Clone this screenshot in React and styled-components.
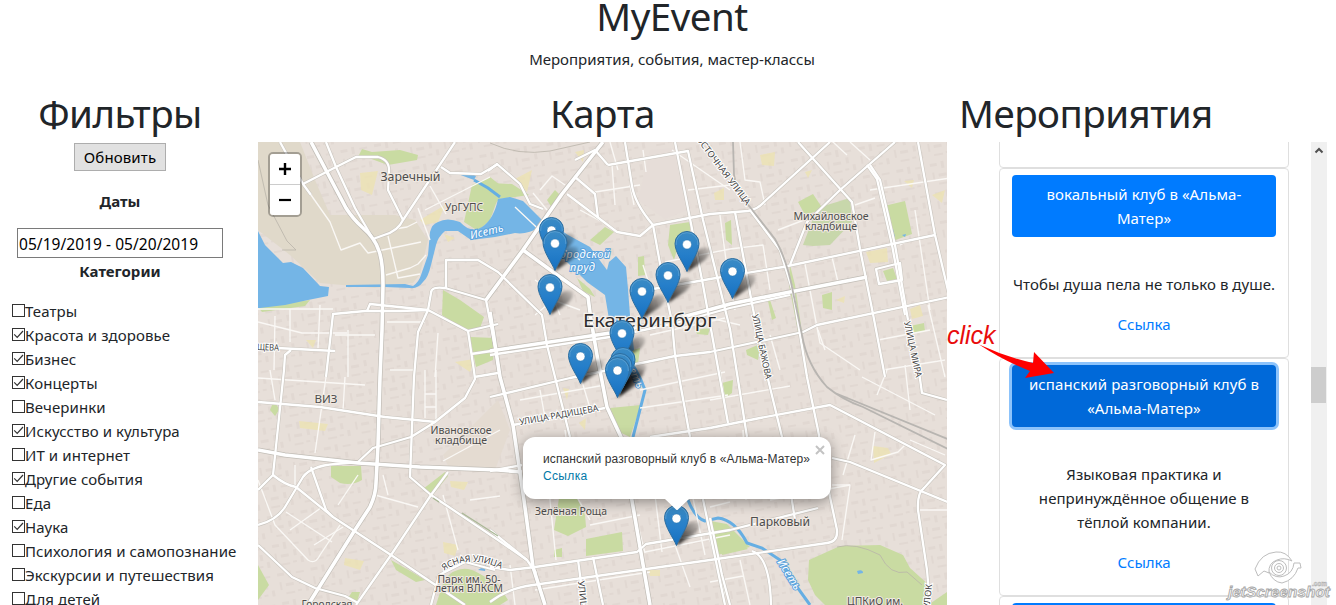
import React from 'react';
import styled, { createGlobalStyle } from 'styled-components';

const GlobalStyle = createGlobalStyle`
  * { box-sizing: border-box; }
  html, body { margin: 0; height: 605px; overflow: hidden; background: #fff; }
  body {
    font-family: "Noto Sans", "Open Sans", sans-serif;
    font-size: 16px;
    line-height: 24px;
    color: #212529;
  }
`;

const Page = styled.div`
  position: relative;
  width: 1336px;
  height: 605px;
  overflow: hidden;
`;
const Header = styled.header`
  height: 89px;
  padding-left: 8px;
  text-align: center;
`;
const Title = styled.h1`
  margin: 0;
  font-size: 38.5px;
  font-weight: 400;
  line-height: ${p => p.$lh || 48}px;
  letter-spacing: -0.5px;
  white-space: nowrap;
`;
const Subtitle = styled.p`
  margin: 15px 0 0;
  font-size: 15px;
`;
const Columns = styled.main`
  display: flex;
  height: 516px;
`;
const Filters = styled.section`
  width: 240px;
  margin-right: 18px;
  display: flex;
  flex-direction: column;
  align-items: center;
  & > * { flex-shrink: 0; }
`;
const RefreshButton = styled.button`
  width: 92px;
  height: 28px;
  margin-top: 6px;
  padding: 0;
  border: 1px solid #adadad;
  background: #e1e1e1;
  color: #000;
  font: 15px/26px "Noto Sans", sans-serif;
  letter-spacing: 0.12px;
`;
const Caption = styled.strong`
  margin-top: ${p => p.$mt}px;
  font-size: 15px;
  height: 24px;
`;
const DateInput = styled.input`
  width: 206px;
  height: 30px;
  margin-top: 15px;
  padding: 1px 1px 0;
  border: 1px solid #7a7a7a;
  font: 15.5px "Noto Sans", sans-serif;
  letter-spacing: 0.05px;
  color: #000;
`;
const CategoryList = styled.div`
  width: 240px;
  margin-top: 16px;
  padding-left: 12px;
`;
const Category = styled.label`
  display: flex;
  align-items: center;
  height: 24px;
  font-size: 15px;
  white-space: nowrap;
  letter-spacing: 0.09px;
`;
const Box = styled.span`
  width: 13px;
  height: 13px;
  margin-top: -1px;
  border: 1px solid #333;
  background: #fff;
  display: flex;
  svg { display: block; }
`;
const MapColumn = styled.section`
  width: 689px;
  text-align: center;
`;
const MapFrame = styled.div`
  position: relative;
  width: 689px;
  height: 463px;
  margin-top: 5px;
  overflow: hidden;
  text-align: left;
`;
const ZoomControl = styled.div`
  position: absolute;
  left: 10px;
  top: 10px;
  border: 2px solid rgba(0, 0, 0, 0.27);
  border-radius: 5px;
  background-clip: padding-box;
`;
const ZoomButton = styled.div`
  width: 30px;
  height: ${p => (p.$first ? 31 : 30)}px;
  background: #fff;
  border-bottom: ${p => (p.$first ? '1px solid #ccc' : '0')};
  border-radius: ${p => (p.$first ? '3px 3px 0 0' : '0 0 3px 3px')};
  display: flex;
  align-items: center;
  justify-content: center;
`;
const Popup = styled.div`
  position: absolute;
  left: 265px;
  top: 295px;
  width: 308px;
  height: 62px;
  padding: 14px 19px 0 20px;
  border-radius: 12px;
  background: #fff;
  box-shadow: 0 3px 14px rgba(0, 0, 0, 0.4);
  font: 12px/17px "Liberation Sans", Arial, sans-serif;
  color: #333;
  white-space: nowrap;
  letter-spacing: 0.12px;
`;
const PopupLink = styled.a`
  display: block;
  color: #0078a8;
  letter-spacing: 0.35px;
`;
const PopupTip = styled.svg`
  position: absolute;
  left: 134px;
  top: 62px;
`;
const CloseIcon = styled.svg`
  position: absolute;
  right: 6px;
  top: 8px;
`;
const EventsColumn = styled.section`
  width: 380px;
  display: flex;
  flex-direction: column;
`;
const EventsTitle = styled.div`
  width: 252px;
  margin-left: 12px;
`;
const EventsPane = styled.div`
  height: 463px;
  margin-top: 5px;
  display: flex;
  overflow: hidden;
`;
const EventList = styled.div`
  width: 290px;
  margin-left: 52px;
`;
const Card = styled.article`
  border: 1px solid #dfdfdf;
  border-radius: 4px;
  height: ${p => p.$height}px;
  margin-top: ${p => p.$mt || 0}px;
  padding: 6px 12px 0;
  text-align: center;
  font-size: 15px;
`;
const EventButton = styled.div`
  width: 264px;
  height: 62px;
  padding: 7px 8px;
  margin-bottom: 35px;
  border-radius: 4px;
  color: #fff;
  background: ${p => (p.$active ? '#0069d9' : '#007bff')};
  box-shadow: ${p => (p.$active ? '0 0 0 3px #8cc3fb' : 'none')};
  letter-spacing: 0.1px;
`;
const Description = styled.p`
  margin: 0 -6px 16px;
  letter-spacing: 0.06px;
`;
const CardLink = styled.a`
  color: #007bff;
`;
const Scrollbar = styled.div`
  width: 16px;
  margin-left: 22px;
  background: #f0f0f0;
  display: flex;
  flex-direction: column;
  svg { display: block; }
`;
const Thumb = styled.div`
  width: 15px;
  height: 36px;
  margin-top: 208px;
  background: #cdcdcd;
`;
const ClickNote = styled.div`
  position: absolute;
  left: 947px;
  top: 321px;
  font: italic 25px/28px "Liberation Sans", Arial, sans-serif;
  color: #e80c0c;
`;
const Arrow = styled.svg`
  position: absolute;
  left: 976px;
  top: 340px;
`;
const Watermark = styled.svg`
  position: absolute;
  left: 1222px;
  top: 546px;
`;

const categories = [
  ['Театры', false], ['Красота и здоровье', true], ['Бизнес', true], ['Концерты', true],
  ['Вечеринки', false], ['Искусство и культура', true], ['ИТ и интернет', false],
  ['Другие события', true], ['Еда', false], ['Наука', true],
  ['Психология и самопознание', false], ['Экскурсии и путешествия', false], ['Для детей', false],
];

const highways = [
  'M311 142L328 174L346 208Q353 219 362 227Q375 238 379 251Q383 262 383 285L382 330L380 377L378 445L376 483Q376 494 370 507L353 533L308 605',
  'M603 142L562 194L523 250L486 300',
  'M258 450L285 455L358 463L420 467L498 470L522 472',
  'M490 312L500 377L513 425L524 500L533 567L545 605',
  'M523 250L560 277L588 297L591 320L597 355L607 407L621 437L650 605',
  'M490 351L610 333L672 320L730 304L790 292L867 277',
];
const roads = [
  'M490 355L610 337L672 324L730 308L790 295',
  'M326 142L336 167L355 208L373 239', 'M280 142L303 184L311 195',
  'M303 184L336 167L356 157H378Q390 160 389 172L388 190L403 220',
  'M455 142L403 220Q398 231 384 235L373 239', 'M441 167L450 173L481 174L498 164',
  'M326 377L333 314L365 311H400L428 310L468 331L498 324', 'M367 311L370 304L428 310',
  'M498 284L486 300L445 288Q431 286 431 293L428 310L418 332L414 377L410 477L431 495L498 540L527 560L536 573',
  'M446 288V260H478L498 272L542 315L547 345L555 377L570 437', 'M468 331L474 371L475 379L465 398L435 422L411 437L373 448L358 462L335 464Q311 466 303 477L285 507Q277 520 258 525',
  'M486 300L496 352L500 377', 'M471 354L498 350', 'M474 377L498 373', 'M258 347L335 351', 'M291 350L285 355L284 370L273 475L258 490',
  'M258 402L320 407L385 417L436 422', 'M273 475Q285 485 296 487L333 517L391 555L431 582L465 605',
  'M311 467L326 510L333 517', 'M258 545L292 577L315 588L345 596L358 603', 'M448 472L431 495L391 555L356 605',
  'M488 171L497 164L520 184L530 204L543 209', 'M575 177L595 194L598 218', 'M567 194L617 232L640 236L653 225L710 214L748 211Q758 209 764 202L830 142',
  'M625 142L632 186Q635 204 653 225L663 280L672 322L675 355L690 437L714 552L725 605',
  'M608 165L688 151L703 220L730 329L747 437', 'M675 142L703 285L728 423', 'M575 160L595 150L608 165',
  'M653 289L710 279L783 267L935 235', 'M798 142L852 202L860 249L873 314L885 377',
  'M895 142L840 190L807 222L790 265', 'M867 165L877 179L892 245L905 315', 'M870 165L880 180L895 245L908 320',
  'M918 142L935 235L950 299', 'M735 212L753 309L767 375L782 437L795 520', 'M490 397L570 378L675 356L710 352L803 332L817 325L950 297',
  'M750 210L780 250L793 292L807 377L818 430L830 497L837 530Q838 542 827 543L710 560L533 585Q508 588 490 602',
  'M513 425L605 408', 'M490 471L522 465', 'M490 530L527 560', 'M490 567L510 570L535 567L637 552L646 544L730 530L818 508',
  'M710 428L760 418L830 405L945 465L924 488Q917 493 918 510L927 570L930 605', 'M650 437L710 428', 'M832 458L850 462L950 503',
  'M593 557L603 605', 'M578 560L584 605', 'M710 518L722 575L730 605', 'M752 551Q770 557 771 605', 'M876 269L900 263L902 280L879 284Z', 'M918 365L922 393L947 400', 'M431 605L439 575L465 562L495 570',
];
const streets = [
  'M311 195L330 222L341 250L360 243L368 253L421 242', 'M395 229L407 227L417 222', 'M388 236L398 278L420 274', 'M386 275L410 268L418 264L426 255', 'M418 208L430 240', 'M425 210L490 177',
  'M430 186L446 214', 'M258 309H333', 'M258 322L302 333H347', 'M275 316L274 370', 'M290 309V342', 'M320 305L318 348', 'M335 335H375', 'M387 322H425', 'M348 330V377', 'M438 333L435 377', 'M390 370H414',
  'M258 378L365 385', 'M345 377L343 410', 'M270 370L275 400', 'M326 377L315 453', 'M425 370V418', 'M436 370V422', 'M425 394H436M425 407H436', 'M375 495L418 507', 'M383 475L388 495', 'M443 461L500 430', 'M470 500L500 496', 'M443 495L458 550',
  'M258 480L275 525L308 560Q315 565 320 555L340 525', 'M290 530L325 505', 'M286 512L332 542', 'M314 545L343 527', 'M358 475L338 505', 'M295 465V485', 'M515 207L550 240L580 260', 'M535 280L550 290L560 315', 'M535 315L553 300L580 310', 'M610 142L618 170', 'M643 150L646 172', 'M595 192L640 185', 'M612 165L615 205', 'M630 185L634 205',
  'M540 190L552 176L565 185', 'M533 193L547 210', 'M580 210L608 225', 'M672 150L730 190', 'M688 190L730 185', 'M720 215L726 260L735 310', 'M665 262L730 249L763 245L770 290', 'M643 265L650 287M650 335L725 318', 'M640 390L725 372M640 408L728 395', 'M662 437L672 490M680 437L705 555', 'M600 370L606 406', 'M580 375L590 408', 'M540 390L545 418M520 400L605 385',
  'M570 485L590 520M565 430L573 490', 'M547 470L556 560', 'M630 495L645 553M655 495L662 552', 'M645 552L730 535', 'M675 545L690 587M710 540L725 595', 'M590 525L640 515', 'M510 565L515 605M535 590L650 572',
  'M740 142L745 180L760 182L765 205', 'M778 230L804 220', 'M805 264L820 343L860 370', 'M832 257L838 282M770 335L780 370', 'M818 330L825 350M870 190L950 178', 'M855 205L875 198M900 245L910 240', 'M915 210L930 310M928 305L945 377', 'M878 340L930 330', 'M883 370L945 360M905 365L910 410', 'M710 318L740 325M710 400L790 386M720 370L728 420', 'M862 377L935 415M887 370L877 395', 'M855 435L843 475M875 432L871 460L898 452L905 445', 'M710 507L730 502M832 485H850L842 540', 'M743 430L746 500M770 500L850 485', 'M740 560L750 605M710 582L743 576', 'M910 440L945 455M920 510H947M847 155L820 130M850 142L870 160',
];
const parks = [
  'M358 157L362 149L372 152L400 150L418 155L417 160L388 165L366 157Z', 'M472 185L490 177L500 185L520 190L498 198L490 220L478 231L464 222Z',
  'M258 307L310 300L305 306L262 312Z', 'M443 290L460 300L484 317L480 328L465 330L442 315Z', 'M470 337L495 338L493 360L476 367Z',
  'M331 466H361L362 480Q352 486 340 483L331 477Z', 'M272 405Q277 402 279 410L275 416L270 410Z', 'M258 565L269 585L258 600Z', 'M423 489L445 472L448 476L432 496Z',
  'M391 560L412 572L425 580L416 582L396 570Z', 'M352 592H360L357 602L348 598Z', 'M436 605L444 580Q460 561 480 574L498 584L508 600L500 605Z',
  'M490 183L512 184L529 195L500 199L490 207Z', 'M547 200L555 190L561 196L552 208Z', 'M590 240L605 227L614 232L600 245Z', 'M577 278L590 289L595 297L583 291Z',
  'M670 225L690 222L690 235L680 240L674 260L668 245Z', 'M638 257L644 256L645 275L638 276Z', 'M610 408L641 405L630 437L615 430Z', 'M559 498H577L585 515L586 527L568 536L554 530Z',
  'M586 539L622 532L623 551L586 556Z', 'M554 550L562 548L562 557L554 557Z', 'M798 202L813 194L823 209L805 215Z', 'M884 206L905 201L912 234L890 242Z',
  'M710 521L727 524L750 547L717 555Z', 'M718 525L748 549L722 555Z', 'M809 560L840 546L880 545L903 555L910 568L930 586L925 605H825L815 595L808 580Z', 'M928 605L950 590V605Z', 'M790 265L795 285L802 332L798 332L789 285Z', 'M770 300L776 318L772 320L768 301Z', 'M822 295L832 292L832 310L823 308Z', 'M746 350L760 344L758 360L747 355Z', 'M725 223L731 220L732 245L726 240Z', 'M633 350L640 348L638 364L632 362Z', 'M910 326L924 323L925 331L912 333Z', 'M883 271L893 268L897 279L887 281Z', 'M490 341L494 340L492 350H490Z', 'M695 330L710 328L708 335L697 334Z', 'M722 383L733 380L732 393L725 398Z',
];
const yellow = ['M360 173L378 171L372 195L361 190Z', 'M299 421L328 424L325 431L300 428Z', 'M420 220L445 205L438 222L425 225Z', 'M444 234L455 238L448 242Z', 'M513 180L532 170L527 192Z', 'M450 481L468 482L464 490L451 487Z', 'M345 558L364 561L360 570L344 565Z', 'M443 542L458 545L455 556L444 553Z', 'M575 152L584 150L583 162Z', 'M760 155L775 152L774 166L762 165Z', 'M866 252L887 248L888 262L870 263Z', 'M873 446L888 448L891 454L874 463Z', 'M910 309L920 305L923 316L912 319Z', 'M306 340L316 340L313 348Z', 'M455 362L474 359L470 372Z', 'M714 193L724 188L724 200L715 200Z', 'M904 181L914 180L912 188Z', 'M932 195L945 190L942 203Z', 'M563 388L569 389L567 400Z', 'M836 300L845 296L844 303Z', 'M805 172L812 170L808 178Z', 'M579 423L586 418L585 430Z', 'M648 570H660V576H650Z'];

const labels = [
  ['Заречный', 410.5, 181, 12.5, 60], ['УрГУПС', 464, 211, 10, 38], ['ВИЗ', 326, 403, 11.5, 23],
  ['Ивановское', 461, 434, 10.5, 61], ['кладбище', 461, 444, 10.5, 52], ['Михайловское', 831, 220, 10.5, 75], ['кладбище', 831, 230, 10.5, 52],
  ['Зелёная Роща', 571, 515, 10.5, 72], ['Парковый', 780, 526, 12.5, 60], ['Парк им. 50-', 469, 583, 10.5, 63], ['летия ВЛКСМ', 469, 592, 10.5, 68],
  ['ЦПКиО им.', 875, 605, 10.5, 56], ['Городская', 327, 608, 10.5, 51],
];
const streetLabels = [
  ['УЛИЦА РАДИЩЕВА', 520, 425, -10, 80], ['УЛИЦА БАЖОВА', 752, 315, 78, 66], ['УЛИЦА МИРА', 904, 322, 78, 57],
  ['ВОСТОЧНАЯ УЛИЦА', 692, 134, 53, 90], ['ЩЕВА', 257, 350, 2, 22], ['УЛИЦА', 578, 581, 84, 34], ['ПЕРЕУЛОК', 927, 632, -84, 48],
];
const markers = [[551.5, 217], [687, 231], [555, 230], [732.5, 258], [668, 262], [550, 274], [642, 278], [622, 320], [580.5, 343], [623, 347], [620, 353], [617.5, 357], [676.5, 505]];

function MapDrawing() {
  return (
    <svg width="689" height="463" viewBox="258 142 689 463" fontFamily="Noto Sans, sans-serif">
      <defs>
        <pattern id="blocks" width="34" height="29" patternUnits="userSpaceOnUse" patternTransform="rotate(-10)">
          <path d="M3 4h7v3H3zM14 3h3v7h-3zM22 5h8v2h-8zM4 13h2v8H4zM10 15h8v3h-8zM23 12h3v6h-3zM29 20h3v6h-3zM9 24h9v2H9zM21 23h4v2h-4z" fill="#dcd2cb" opacity=".5" />
        </pattern>
        <linearGradient id="pin" x1="0" y1="0" x2="0" y2="1">
          <stop offset="0" stopColor="#3b8bc4" /><stop offset=".55" stopColor="#267fca" /><stop offset="1" stopColor="#1670c0" />
        </linearGradient>
        <filter id="soft" x="-30%" y="-30%" width="160%" height="160%"><feGaussianBlur stdDeviation="1.4" /></filter>
        <linearGradient id="shade" x1="0" y1="1" x2="1" y2="0">
          <stop offset="0" stopColor="#000" stopOpacity=".9" /><stop offset=".5" stopColor="#000" stopOpacity=".5" /><stop offset="1" stopColor="#000" stopOpacity=".1" />
        </linearGradient>
        <path id="yasnaya" d="M444 571Q468 554 499 568" />
        <symbol id="marker-shadow" overflow="visible">
          <path d="M0 41L4 26Q12 14 22 17Q26 21 18 29Z" fill="url(#shade)" filter="url(#soft)" />
        </symbol>
        <symbol id="marker" overflow="visible">
          <path d="M0 40.5C-3 33 -12 21.5 -12 12.5A12 12 0 0 1 12 12.5C12 21.5 3 33 0 40.5Z" fill="url(#pin)" stroke="#2c6d9f" strokeWidth="1" />
          <path d="M-10.8 14A10.9 10.9 0 1 1 10.8 14" fill="none" stroke="#69a9d8" strokeWidth=".8" opacity=".75" />
          <circle cx="0" cy="13.5" r="4.5" fill="#fff" stroke="#2c74aa" strokeWidth=".5" />
        </symbol>
      </defs>
      <rect x="258" y="142" width="689" height="463" fill="#e7dfd9" />
      <rect x="258" y="142" width="689" height="463" fill="url(#blocks)" />
      <path d="M258 142H300L315 180L330 215H395L415 220L428 240L420 274L413 283L375 288L320 283L290 255L258 230Z" fill="#e0d9ca" />
      <path d="M650 150L675 148L692 208L665 219L638 200Z" fill="#e6ddd8" />
      <path d="M443 455L498 400L510 430L495 470H450Z" fill="#e4dbd1" />
      <g fill="#c9dba2">{parks.map((d, i) => <path key={i} d={d} />)}</g>
      <path d="M803 245L817 208L850 198L852 222L830 245L813 246Z" fill="#c8d7ab" />
      <g fill="#ede3b3" opacity=".8">{yellow.map((d, i) => <path key={i} d={d} />)}</g>
      <g fill="#74b5e6">
        <path d="M258 231L265 245L283 263L291 262L303 268L320 286L329 287L328 296L308 300L285 305L260 308H258Z" />
        <path d="M346 285L405 284L413 286Q419 282 421 275L428 255L430 232Q432 224 438 222Q447 217 460 222Q471 234 482 227Q494 219 498 199L510 197L523 201L542 220L540 227Q527 235 515 233L495 237L471 240L458 231H445Q438 237 436 245L431 265Q428 278 423 282Q418 289 410 288L385 287H346Z" />
        <path d="M458 174L470 173L476 176L474 180Z" />
        <path d="M543 218L568 235L590 247L601 262L607 270L609 262L616 256L626 267L628 289L630 315L634 350L622 358L610 325L605 295L587 282L565 260L545 235Z" />
        <path d="M889 225L893 229L895 237L891 237ZM902 235L906 234L905 237ZM478 570L486 565L485 571ZM857 571Q863 569 863 573L858 574Z" />
      </g>
      <path d="M474 180L488 188L500 197M622 350Q638 370 645 390L633 437M688 500Q695 518 705 521L718 518Q735 520 747 543L762 548L780 560L797 587L810 605" fill="none" stroke="#65aee3" strokeWidth="3" />
      <g fill="none" strokeLinejoin="round">
        <g stroke="#faf8f5" strokeWidth="1.35">{streets.map((d, i) => <path key={i} d={d} />)}</g>
        <g stroke="#c9c5be" strokeWidth="3.4">{roads.map((d, i) => <path key={i} d={d} />)}</g>
        <g stroke="#c1bdb6" strokeWidth="5">{highways.map((d, i) => <path key={i} d={d} />)}</g>
        <g stroke="#fff" strokeWidth="2.3">{roads.map((d, i) => <path key={i} d={d} />)}</g>
        <g stroke="#fff" strokeWidth="3.6">{highways.map((d, i) => <path key={i} d={d} />)}</g>
        <path d="M733 142L734 175Q737 195 750 207L775 239Q787 260 793 292L802 335Q807 365 827 387Q843 400 863 407L950 450M835 393L950 440" stroke="#b8b5b1" strokeWidth="1.8" />
        <path d="M490 143Q518 156 550 151L590 142M258 160L268 205L287 241L296 250H282M837 547Q855 542 880 555Q890 576 907 572L922 585" stroke="#b9b4aa" strokeWidth=".8" />
        <path d="M433 498L439 502M462 513L498 536" stroke="#a9b896" strokeWidth="1.3" />
      </g>
      <g stroke="#f0e9e2" strokeWidth="2" paintOrder="stroke" fill="#4d4d4d" textAnchor="middle" strokeLinejoin="round">
        {labels.map(([t, x, y, s, w]) => <text key={t + x} x={x} y={y} fontSize={s} textLength={w} lengthAdjust="spacingAndGlyphs">{t}</text>)}
      </g>
      <g stroke="#fff" strokeWidth="2" paintOrder="stroke" fill="#444" fontSize="9">
        {streetLabels.map(([t, x, y, a, w]) => <text key={t + x} transform={`translate(${x} ${y}) rotate(${a})`} textLength={w} lengthAdjust="spacingAndGlyphs">{t}</text>)}
        <text textLength="60"><textPath href="#yasnaya">ЯСНАЯ УЛИЦА</textPath></text>
      </g>
      <g fill="#fff" stroke="#5aa2dc" strokeWidth="2" paintOrder="stroke" fontStyle="italic" fontSize="11">
        <text transform="translate(471 239) rotate(-13)" textLength="34">Исеть</text>
        <text x="555" y="258" textLength="55">Городской</text><text x="570" y="271" textLength="25">пруд</text>
        <text transform="translate(777 562) rotate(58)" textLength="34">Исеть</text>
        <text transform="translate(623 358) rotate(65)" textLength="34">Исеть</text>
      </g>
      <text x="583" y="327" fontSize="18.5" textLength="133" lengthAdjust="spacingAndGlyphs" fill="#2d2d2d" stroke="#f5f1ed" strokeWidth="2.5" paintOrder="stroke">Екатеринбург</text>
      {markers.map(([x, y], i) => <use key={i} href="#marker-shadow" x={x} y={y} />)}
      {markers.map(([x, y], i) => <use key={i} href="#marker" x={x} y={y} />)}
    </svg>
  );
}

export default function App() {
  return (
    <>
      <GlobalStyle />
      <Page>
        <Header>
          <Title $lh={32}>MyEvent</Title>
          <Subtitle>Мероприятия, события, мастер-классы</Subtitle>
        </Header>
        <Columns>
          <Filters>
            <Title>Фильтры</Title>
            <RefreshButton>Обновить</RefreshButton>
            <Caption $mt={18}>Даты</Caption>
            <DateInput readOnly value="05/19/2019 - 05/20/2019" />
            <Caption $mt={1}>Категории</Caption>
            <CategoryList>
              {categories.map(([name, checked]) => (
                <Category key={name}>
                  <Box>{checked && <svg width="11" height="11"><path d="M1.2 5.3L4.2 8.3L10 2" fill="none" stroke="#333" strokeWidth="1.2" /></svg>}</Box>
                  {name}
                </Category>
              ))}
            </CategoryList>
          </Filters>
          <MapColumn>
            <Title>Карта</Title>
            <MapFrame>
              <MapDrawing />
              <ZoomControl>
                <ZoomButton $first><svg width="14" height="14"><path d="M7 1V13M1 7H13" stroke="#000" strokeWidth="2.4" /></svg></ZoomButton>
                <ZoomButton><svg width="14" height="14"><path d="M1 7H13" stroke="#000" strokeWidth="2.2" /></svg></ZoomButton>
              </ZoomControl>
              <Popup>
                испанский разговорный клуб в «Альма-Матер»
                <PopupLink>Ссылка</PopupLink>
                <CloseIcon width="10" height="10"><path d="M1 1L9 9M9 1L1 9" stroke="#c3c3c3" strokeWidth="2" /></CloseIcon>
                <PopupTip width="40" height="12"><path d="M8 0H32L21 10.5Q20 11.5 19 10.5Z" fill="#fff" /></PopupTip>
              </Popup>
            </MapFrame>
          </MapColumn>
          <EventsColumn>
            <EventsTitle><Title>Мероприятия</Title></EventsTitle>
            <EventsPane>
              <EventList>
                <Card $height={190} $mt={-164} />
                <Card $height={190}>
                  <EventButton>вокальный клуб в «Альма-<br />Матер»</EventButton>
                  <Description>Чтобы душа пела не только в душе.</Description>
                  <CardLink>Ссылка</CardLink>
                </Card>
                <Card $height={238}>
                  <EventButton $active>испанский разговорный клуб в<br />«Альма-Матер»</EventButton>
                  <Description>Языковая практика и<br />непринуждённое общение в<br />тёплой компании.</Description>
                  <CardLink>Ссылка</CardLink>
                </Card>
                <Card $height={190}><EventButton /></Card>
              </EventList>
              <Scrollbar>
                <svg width="16" height="17"><path d="M4.5 10.5L8 7L11.5 10.5" fill="none" stroke="#505050" strokeWidth="2" /></svg>
                <Thumb />
              </Scrollbar>
            </EventsPane>
          </EventsColumn>
        </Columns>
        <ClickNote>click</ClickNote>
        <Arrow width="82" height="42"><path d="M3 4.5Q30 17 57 23L58 12L78 33L49 38L54 31Q28 21 3 4.5Z" fill="#f00" /></Arrow>
        <Watermark width="114" height="59">
          <g fill="none" stroke="#bdbdbd" strokeWidth="1">
            <path d="M33 23Q39 7 54 6Q64 5 70 15Q62 11 55 14Q46 17 47 27L42 25L36 30Z" fill="#fff" />
            <path d="M78 17L72 17Q71 27 62 30Q54 33 47 26Q51 36 60 37Q72 34 76 22L79 22Z" fill="#fff" />
            <circle cx="57" cy="22" r="7.5" /><circle cx="57" cy="22" r="4.5" /><circle cx="57" cy="22" r="2" />
          </g>
          <text x="6" y="51" fontFamily="Liberation Sans, sans-serif" fontStyle="italic" fontWeight="700" fontSize="15" textLength="102" lengthAdjust="spacingAndGlyphs" fill="#f3f3f3" stroke="#a5a5a5" strokeWidth=".8">jetScreenshot</text>
          <text x="90" y="40" fontFamily="Liberation Sans, sans-serif" fontWeight="700" fontSize="6.5" textLength="15" fill="#fff" stroke="#aaa" strokeWidth=".5">.com</text>
        </Watermark>
      </Page>
    </>
  );
}
